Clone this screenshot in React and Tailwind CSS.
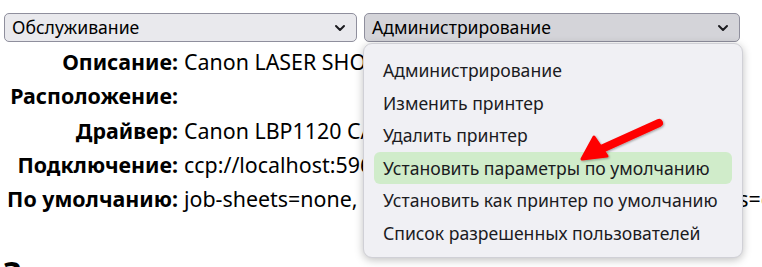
import React from 'react';

const Chevron = () => (
  <svg width="12" height="8" viewBox="0 0 12 8" fill="none" stroke="#1b1b1f" strokeWidth="2" strokeLinecap="round" strokeLinejoin="round">
    <path d="M2 2l4 4 4-4" />
  </svg>
);

const rows = [
  ['Описание:', 'Canon LASER SHOT LBP-1120'],
  ['Расположение:', ''],
  ['Драйвер:', 'Canon LBP1120 CAPT ver.1.5'],
  ['Подключение:', 'ccp://localhost:59687'],
  ['По умолчанию:', 'job-sheets=none, none media=iso_a4_210x297mm sides=one-sided'],
];

const menu = [
  'Администрирование',
  'Изменить принтер',
  'Удалить принтер',
  'Установить параметры по умолчанию',
  'Установить как принтер по умолчанию',
  'Список разрешенных пользователей',
];

export default function App() {
  return (
    <div className="relative w-[762px] h-[267px] overflow-hidden bg-white text-black font-['Noto_Sans',sans-serif]">
      {/* верхние списки */}
      <div className="flex gap-[7px] pl-[4px] pt-[13px]">
        <div className="w-[353px] h-[29px] flex items-center justify-between pl-[7px] pr-[10px] rounded-[5px] border border-[#8f8f9d] bg-[#e9e9ed] text-[17.6px]">
          <span>Обслуживание</span>
          <Chevron />
        </div>
        <div className="w-[376px] h-[29px] flex items-center justify-between pl-[7px] pr-[10px] rounded-[5px] border border-[#8f8f9d] bg-[#d4d4d9] text-[17.6px]">
          <span>Администрирование</span>
          <Chevron />
        </div>
      </div>

      {/* таблица */}
      <div className="pt-[3px] text-[21.4px] whitespace-nowrap">
        {rows.map(([k, v]) => (
          <div key={k} className="flex h-[34.25px] items-center">
            <div className="w-[179px] shrink-0 text-right font-bold pr-[1px]">{k}</div>
            <div className="pl-[5px]">{v}</div>
          </div>
        ))}
      </div>

      <div className="pt-[41px] pl-[3px] text-[32px] font-bold leading-none">Задания</div>

      {/* выпадающее меню */}
      <div className="absolute left-[363px] top-[43px] w-[380px] h-[215px] rounded-[9px] bg-[#f0f0f4] border border-[#d0d0d6] shadow-[0_2px_8px_rgba(0,0,0,0.25)] px-[10px] pt-[10px] text-[17.6px] text-[#1b1b1f]">
        {menu.map((m, i) => (
          <div
            key={m}
            className={
              'h-[32.5px] flex items-center pl-[9px] rounded-[6px] ' +
              (i === 3 ? 'bg-[#d0ecca]' : '')
            }
          >
            {m}
          </div>
        ))}
      </div>

      {/* стрелка */}
      <svg className="absolute left-[570px] top-[110px]" width="110" height="60" viewBox="0 0 110 60">
        <defs>
          <filter id="sh" x="-20%" y="-20%" width="140%" height="140%">
            <feDropShadow dx="1" dy="1" stdDeviation="1.2" floodColor="#000" floodOpacity="0.35" />
          </filter>
        </defs>
        <g filter="url(#sh)">
          <path d="M89 13 L27 41" stroke="#f00" strokeWidth="8" strokeLinecap="round" fill="none" />
          <path d="M12 49 L24 27 L37 46 Z" fill="#f00" stroke="#f00" strokeWidth="3" strokeLinejoin="round" />
        </g>
      </svg>
    </div>
  );
}
